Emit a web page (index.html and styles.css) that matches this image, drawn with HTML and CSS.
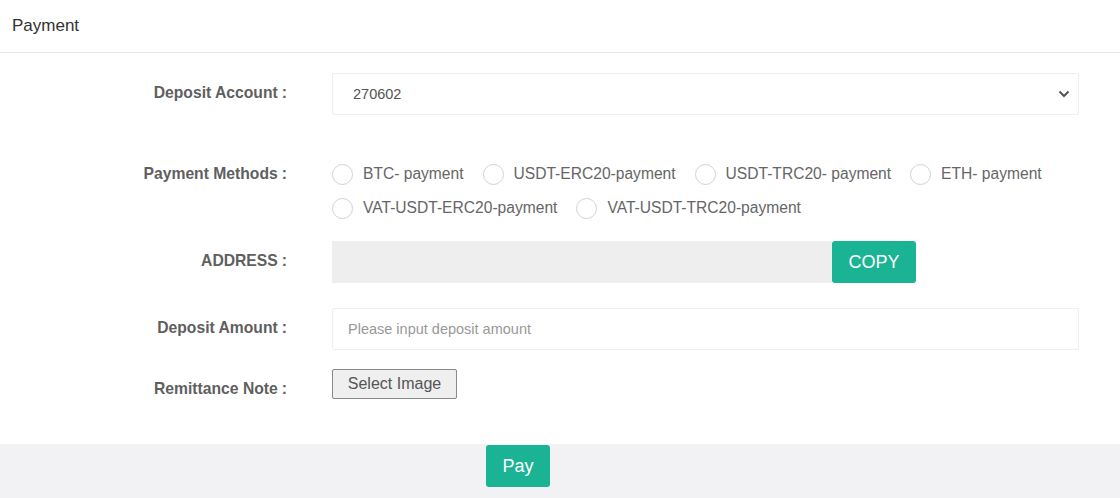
FILE: index.html
```html
<!DOCTYPE html>
<html lang="en">
<head>
<meta charset="utf-8">
<title>Payment</title>
<link rel="stylesheet" href="styles.css">
</head>
<body>
<div class="page">
  <div class="header">Payment</div>
  <form class="form">
    <div class="row row-account">
      <label class="label">Deposit Account<span class="colon">:</span></label>
      <div class="control">
        <div class="select">
          <span class="select-value">270602</span>
          <svg class="chevron" width="12" height="8" viewBox="0 0 12 8"><path d="M1.5 1.5 L6 6 L10.5 1.5" fill="none" stroke="#555" stroke-width="2"/></svg>
        </div>
      </div>
    </div>
    <div class="row row-methods">
      <label class="label">Payment Methods<span class="colon">:</span></label>
      <div class="control radios">
        <span class="radio"><i class="circle"></i>BTC- payment</span>
        <span class="radio"><i class="circle"></i>USDT-ERC20-payment</span>
        <span class="radio"><i class="circle"></i>USDT-TRC20- payment</span>
        <span class="radio"><i class="circle"></i>ETH- payment</span>
        <span class="radio"><i class="circle"></i>VAT-USDT-ERC20-payment</span>
        <span class="radio"><i class="circle"></i>VAT-USDT-TRC20-payment</span>
      </div>
    </div>
    <div class="row row-address">
      <label class="label">ADDRESS<span class="colon">:</span></label>
      <div class="control address">
        <div class="address-box"></div>
        <button type="button" class="btn btn-copy">COPY</button>
      </div>
    </div>
    <div class="row row-amount">
      <label class="label">Deposit Amount<span class="colon">:</span></label>
      <div class="control">
        <input class="input" type="text" placeholder="Please input deposit amount">
      </div>
    </div>
    <div class="row row-note">
      <label class="label">Remittance Note<span class="colon">:</span></label>
      <div class="control">
        <button type="button" class="file-btn">Select Image</button>
      </div>
    </div>
  </form>
  <div class="footer">
    <button type="button" class="btn btn-pay">Pay</button>
  </div>
</div>
</body>
</html>
```
FILE: styles.css
```css
html, body {
  margin: 0;
  padding: 0;
  background: #fff;
  font-family: "Liberation Sans", Arial, sans-serif;
  color: #333;
}

.page {
  width: 1120px;
  height: 498px;
  overflow: hidden;
  display: flex;
  flex-direction: column;
}

.header {
  height: 52px;
  line-height: 52px;
  padding-left: 12px;
  font-size: 17px;
  color: #333;
  border-bottom: 1px solid #e8e8e8;
}

.form {
  padding-top: 20px;
  flex: 1;
}

.row {
  display: flex;
  align-items: flex-start;
}

.label {
  width: 287px;
  flex: none;
  text-align: right;
  padding: 10px 0 8px;
  line-height: 20px;
  font-size: 15.7px;
  font-weight: bold;
  color: #5f5f5f;
}

.colon {
  margin-left: 4px;
}

.control {
  margin-left: 45px;
}

.row-account { margin-bottom: 39px; }
.row-methods { margin-bottom: 13px; }
.row-address { margin-bottom: 25px; }
.row-amount { margin-bottom: 19px; }

.select {
  height: 40px;
  border: 1px solid #eee;
  border-radius: 2px;
  display: flex;
  align-items: center;
  justify-content: space-between;
  padding: 0 8px 0 20px;
  box-sizing: content-box;
  width: 717px;
}

.select-value {
  font-size: 14.5px;
  color: #555;
}

.chevron {
  display: block;
}

.radios {
  width: 740px;
  display: flex;
  flex-wrap: wrap;
  padding-top: 6px;
}

.radio {
  display: inline-flex;
  align-items: center;
  height: 28px;
  line-height: 28px;
  margin: 0 19px 6px 0;
  font-size: 15.6px;
  color: #666;
}

.circle {
  display: inline-block;
  border: 1px solid #d2d2d2;
  border-radius: 50%;
  margin-right: 10px;
  box-sizing: border-box;
  width: 21px;
  height: 21px;
}

.address {
  display: flex;
}

.address-box {
  width: 500px;
  height: 42px;
  background: #eee;
}

.btn {
  border: none;
  background: #1ab394;
  color: #fff;
  font-family: "Liberation Sans", Arial, sans-serif;
  border-radius: 3px;
  cursor: pointer;
  padding: 0;
}

.btn-copy {
  width: 84px;
  height: 42px;
  font-size: 18px;
}

.input {
  width: 747px;
  height: 42px;
  box-sizing: border-box;
  border: 1px solid #eee;
  border-radius: 2px;
  padding: 0 15px;
  font-family: "Liberation Sans", Arial, sans-serif;
  font-size: 14.5px;
  color: #333;
  outline: none;
}

.input::placeholder {
  color: #999;
}

.file-btn {
  width: 125px;
  height: 30px;
  border: 1px solid #8a8a8a;
  border-radius: 2px;
  background: #efefef;
  font-family: "Liberation Sans", Arial, sans-serif;
  font-size: 16px;
  color: #555;
  padding: 0;
}

.footer {
  height: 54px;
  background: #f2f2f4;
  padding-left: 486px;
  padding-top: 1px;
  box-sizing: border-box;
}

.btn-pay {
  width: 64px;
  height: 42px;
  font-size: 18px;
}
```
